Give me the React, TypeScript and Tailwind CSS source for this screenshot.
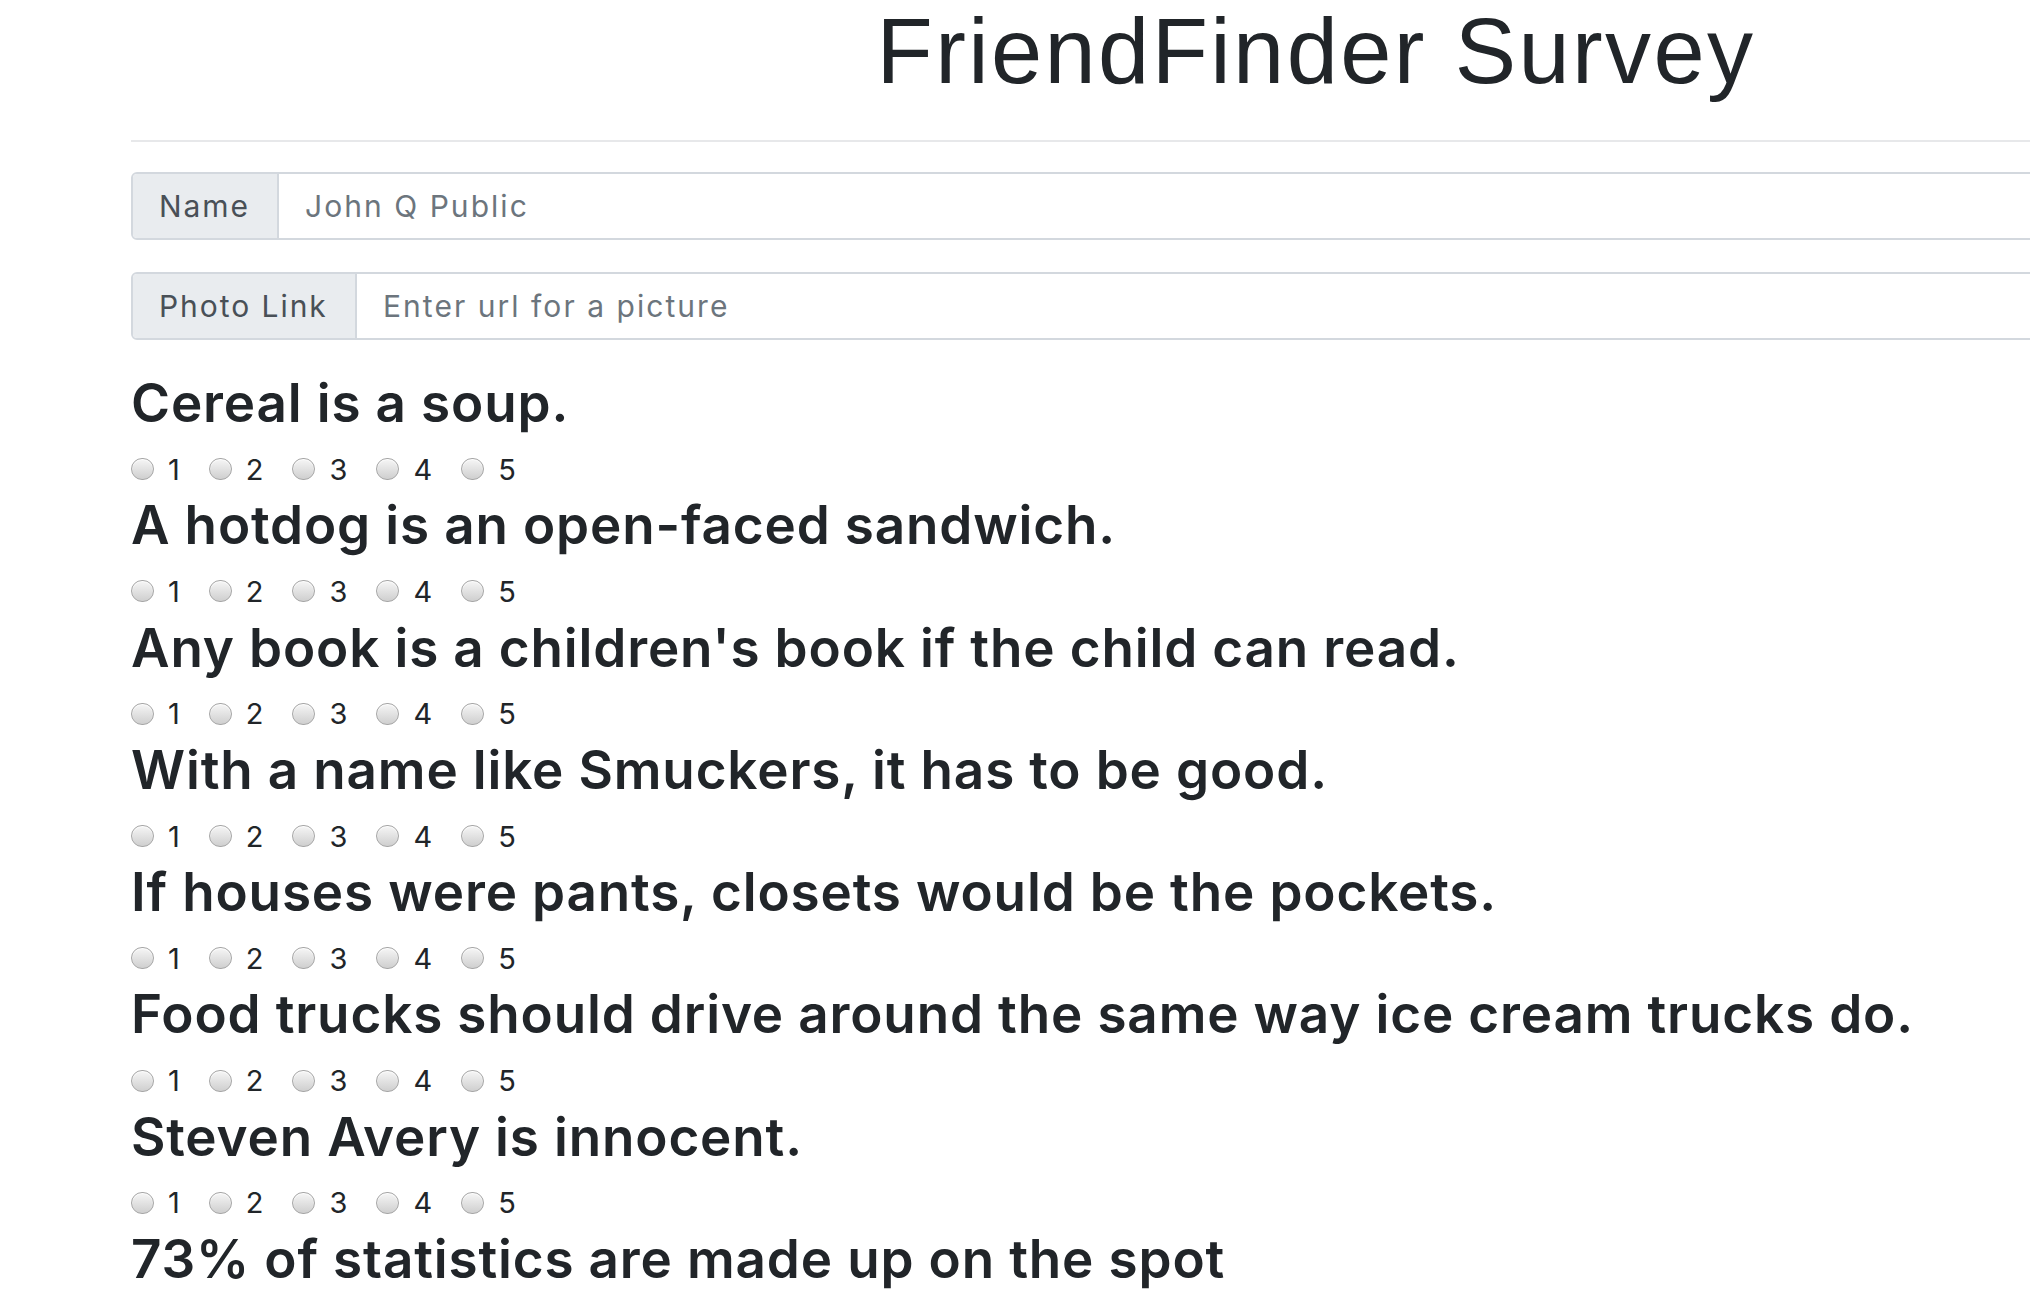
import React from "react";

const questions = [
  "Cereal is a soup.",
  "A hotdog is an open-faced sandwich.",
  "Any book is a children's book if the child can read.",
  "With a name like Smuckers, it has to be good.",
  "If houses were pants, closets would be the pockets.",
  "Food trucks should drive around the same way ice cream trucks do.",
  "Steven Avery is innocent.",
  "73% of statistics are made up on the spot",
];

function Radio({ label }: { label: string }) {
  return (
    <label className="flex items-center mr-[29px]">
      <span className="w-[23px] h-[22px] rounded-full border border-[#a6a6a6] bg-linear-to-b from-[#f6f6f6] to-[#cfcfcf] shadow-[inset_0_1px_1px_rgba(255,255,255,0.8)]" />
      <span className="ml-[14px] text-[29px] leading-none text-[#212529]">{label}</span>
    </label>
  );
}

function InputGroup({ label, placeholder, labelWidth }: { label: string; placeholder: string; labelWidth: string }) {
  return (
    <div className="flex h-[68px] rounded-[6px] border-2 border-[#d3d8de] overflow-hidden">
      <div className={`${labelWidth} shrink-0 flex items-center pl-[26px] bg-[#e9ecef] border-r-2 border-[#d3d8de] text-[30px] text-[#495057] tracking-[0.065em]`}>
        {label}
      </div>
      <input
        className="flex-1 pl-[26px] text-[30px] tracking-[0.068em] text-[#495057] placeholder:text-[#6c757d] outline-none bg-white"
        placeholder={placeholder}
      />
    </div>
  );
}

export default function App() {
  return (
    <div className="w-[2030px] h-[1296px] overflow-hidden bg-white">
      <div className="ml-[131px] w-[2370px] font-['Inter',sans-serif]">
        <h1 className="text-center text-[92px] leading-[103px] text-[#212529] font-['Liberation_Sans',Arial,sans-serif] tracking-[0.026em]">
          FriendFinder Survey
        </h1>
        <hr className="mt-[37px] border-t-2 border-[#e7e8ea]" />
        <div className="mt-[30px]">
          <InputGroup label="Name" placeholder="John Q Public" labelWidth="w-[146px]" />
        </div>
        <div className="mt-[32px]">
          <InputGroup label="Photo Link" placeholder="Enter url for a picture" labelWidth="w-[224px]" />
        </div>
        <div className="mt-[32px]">
          {questions.map((q, i) => (
            <div key={i}>
              <h3 className="text-[53px] leading-[62px] font-semibold text-[#212529] tracking-[0.016em]">{q}</h3>
              {i < questions.length - 1 && (
                <div className="h-[60.3px] pt-[10px] flex items-center">
                  {["1", "2", "3", "4", "5"].map((n) => (
                    <Radio key={n} label={n} />
                  ))}
                </div>
              )}
            </div>
          ))}
        </div>
      </div>
    </div>
  );
}
